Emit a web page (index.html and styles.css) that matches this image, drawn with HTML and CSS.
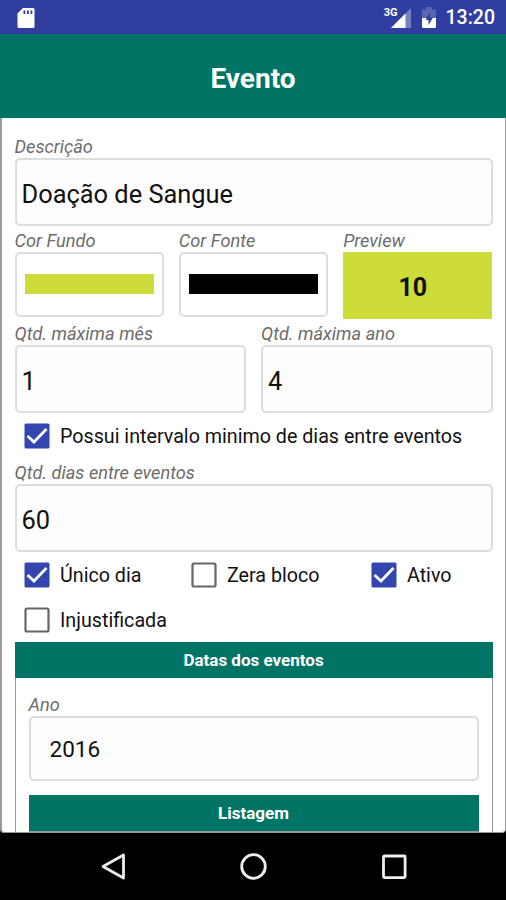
FILE: index.html
```html
<!DOCTYPE html>
<html lang="pt-BR">
<head>
  <meta charset="UTF-8">
  <title>Evento</title>
  <meta name="viewport" content="width=device-width, initial-scale=1.0">
  <link rel="stylesheet" href="styles.css">
</head>
<body>
  <div class="statusbar">
    <svg class="sd" width="18" height="22" viewBox="0 0 18 22">
      <path d="M6 1h10a1.500 1.500 0 0 1 1.500 1.500v17a1.500 1.500 0 0 1-1.500 1.500H2a1.500 1.500 0 0 1-1.500-1.500V6.500z" fill="#fff"/>
      <path d="M6.500 3.500h1.800v3.500H6.500zM10 3.500h1.800v3.500H10zM13.500 3.500h1.800v3.500h-1.800z" fill="#303f9f"/>
    </svg>
    <span class="net">3G</span>
    <svg class="signal" width="20" height="20" viewBox="0 0 20 20">
      <path d="M20 0v20H0z" fill="#7581c3"/>
      <path d="M14.500 5.500V20H0z" fill="#fff"/>
    </svg>
    <svg class="battery" width="14" height="21" viewBox="0 0 14 21">
      <path d="M4 0h6v2.500h4V11H0V2.500h4z" fill="#5966b3"/>
      <path d="M0 11h14v8.500a1.500 1.500 0 0 1-1.500 1.500h-11A1.500 1.500 0 0 1 0 19.500z" fill="#fff"/>
      <path d="M8 5L3.500 13H6.500v5L11 10.500H8z" fill="#303f9f"/>
    </svg>
    <span class="clock">13:20</span>
  </div>

  <div class="header">Evento</div>

  <div class="content">
    <div class="label">Descrição</div>
    <div class="input">Doação de Sangue</div>

    <div class="row">
      <div class="col">
        <div class="label">Cor Fundo</div>
        <div class="color"><div class="bar lime"></div></div>
      </div>
      <div class="col">
        <div class="label">Cor Fonte</div>
        <div class="color"><div class="bar black"></div></div>
      </div>
      <div class="col">
        <div class="label">Preview</div>
        <div class="preview">10</div>
      </div>
    </div>

    <div class="row">
      <div class="col">
        <div class="label">Qtd. máxima mês</div>
        <div class="input">1</div>
      </div>
      <div class="col">
        <div class="label">Qtd. máxima ano</div>
        <div class="input">4</div>
      </div>
    </div>

    <div class="checks">
      <div class="check">
        <svg class="box" viewBox="0 0 26 26"><rect x="0.500" y="0.500" width="25" height="25" rx="1.500" fill="#3346b0"/><path d="M3.500 13l6.500 6L22.500 6" fill="none" stroke="#fff" stroke-width="2.800"/></svg>
        <span>Possui intervalo minimo de dias entre eventos</span>
      </div>
    </div>

    <div class="label">Qtd. dias entre eventos</div>
    <div class="input">60</div>

    <div class="checks">
      <div class="check c1">
        <svg class="box" viewBox="0 0 26 26"><rect x="0.500" y="0.500" width="25" height="25" rx="1.500" fill="#3346b0"/><path d="M3.500 13l6.500 6L22.500 6" fill="none" stroke="#fff" stroke-width="2.800"/></svg>
        <span>Único dia</span>
      </div>
      <div class="check c2">
        <svg class="box" viewBox="0 0 26 26"><rect x="1.500" y="1.500" width="23" height="23" rx="1.500" fill="none" stroke="#666" stroke-width="2.200"/></svg>
        <span>Zera bloco</span>
      </div>
      <div class="check">
        <svg class="box" viewBox="0 0 26 26"><rect x="0.500" y="0.500" width="25" height="25" rx="1.500" fill="#3346b0"/><path d="M3.500 13l6.500 6L22.500 6" fill="none" stroke="#fff" stroke-width="2.800"/></svg>
        <span>Ativo</span>
      </div>
    </div>
    <div class="checks">
      <div class="check">
        <svg class="box" viewBox="0 0 26 26"><rect x="1.500" y="1.500" width="23" height="23" rx="1.500" fill="none" stroke="#666" stroke-width="2.200"/></svg>
        <span>Injustificada</span>
      </div>
    </div>

    <div class="title">Datas dos eventos</div>
    <div class="panel">
      <div class="label">Ano</div>
      <div class="input select">2016</div>
      <div class="title">Listagem</div>
      <div class="list"></div>
    </div>
  </div>

  <div class="navbar">
    <svg width="28" height="28" viewBox="0 0 28 28"><path d="M25.500 2v23L5 13.500z" fill="none" stroke="#eee" stroke-width="2.800" stroke-linejoin="round"/></svg>
    <svg width="28" height="28" viewBox="0 0 28 28"><circle cx="14.500" cy="13.500" r="11.800" fill="none" stroke="#eee" stroke-width="2.800"/></svg>
    <svg width="28" height="28" viewBox="0 0 28 28"><rect x="3.500" y="3" width="21.600" height="21.600" rx="1" fill="none" stroke="#eee" stroke-width="2.800"/></svg>
  </div>
</body>
</html>
```

FILE: styles.css
```css
* {
  box-sizing: border-box;
}

body {
  font-family: Roboto, sans-serif;
  margin: 0;
  width: 506px;
  height: 900px;
  display: flex;
  flex-direction: column;
  overflow: hidden;
  background: #000;
  color: #111;
}

.statusbar {
  height: 34px;
  flex: none;
  display: flex;
  align-items: center;
  padding: 1px 11px 0 17px;
  background: #303f9f;
  color: #fff;
}

.sd {
  margin-right: auto;
}

.net {
  font-size: 11px;
  font-weight: bold;
  line-height: 12px;
  margin: 0 -7px 10px 0;
  z-index: 1;
}

.signal {
  margin-right: 11px;
}

.battery {
  margin-right: 10px;
}

.clock {
  font-size: 19.5px;
  font-weight: 500;
  line-height: 24px;
  padding-top: 1px;
}

.header {
  height: 84px;
  flex: none;
  background: #007566;
  color: #fff;
  font-size: 28px;
  font-weight: bold;
  line-height: 89px;
  text-align: center;
}

.content {
  height: 715px;
  flex: none;
  overflow: hidden;
  background: #fff;
  border: 1px solid #999;
  border-top-width: 0;
  border-left-width: 2px;
  border-radius: 0 0 4px 4px;
  padding: 14px 12.5px 0 12.5px;
}

.label {
  height: 26px;
  font-size: 18.2px;
  font-style: italic;
  line-height: 29px;
  color: #6c6c6c;
  white-space: nowrap;
}

.input {
  height: 68px;
  border: 2px solid #ddd;
  border-radius: 5px;
  background: #fdfdfd;
  padding-left: 5px;
  font-size: 25.4px;
  line-height: 69px;
}

.row {
  display: flex;
  gap: 15px;
}

.col {
  flex: 1;
}

.color {
  height: 65px;
  border: 2px solid #ddd;
  border-radius: 5px;
  padding: 20px 8px;
}

.bar {
  height: 20px;
}

.lime {
  background: #cddc39;
}

.black {
  background: #000;
}

.preview {
  height: 67px;
  background: #cddc39;
  padding-right: 10px;
  font-size: 25px;
  font-weight: bold;
  line-height: 71px;
  text-align: center;
}

.checks {
  height: 45px;
  display: flex;
  align-items: center;
  padding-left: 9.5px;
}

.check {
  display: flex;
  align-items: center;
  font-size: 19.7px;
}

.check span {
  padding-top: 1px;
}

.c1 {
  width: 167px;
}

.c2 {
  width: 180px;
}

.box {
  width: 26px;
  height: 26px;
  margin-right: 10px;
}

.title {
  height: 36px;
  background: #007566;
  color: #fff;
  font-size: 17px;
  font-weight: bold;
  line-height: 37px;
  text-align: center;
}

.panel {
  height: 200px;
  border: 1px solid #999;
  border-top: 0;
  padding: 12px 13px 0;
}

.select {
  height: 65px;
  padding-left: 19px;
  margin-bottom: 14px;
  font-size: 22.5px;
  line-height: 63px;
}

.list {
  height: 40px;
  border: 1px solid #999;
}

.navbar {
  height: 67px;
  flex: none;
  display: flex;
  justify-content: space-between;
  align-items: center;
  padding: 0 98px;
}
```
